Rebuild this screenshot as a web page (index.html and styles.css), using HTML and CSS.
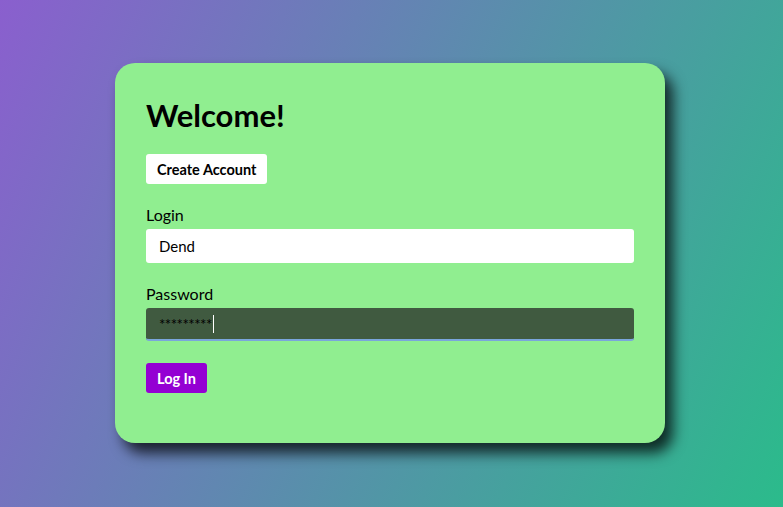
FILE: index.html
```html
<!DOCTYPE html>
<html>
<head>
<meta charset="utf-8">
<link rel="stylesheet" href="styles.css">
</head>
<body>
<div class="card">
  <h1 class="title">Welcome!</h1>
  <button class="btn btn-light">Create Account</button>
  <label class="label">Login</label>
  <div class="input input-light">Dend</div>
  <label class="label">Password</label>
  <div class="input input-dark">*********<span class="caret"></span></div>
  <button class="btn btn-violet">Log In</button>
</div>
</body>
</html>
```
FILE: styles.css
```css
html, body {
  margin: 0;
  height: 100%;
}
body {
  background: linear-gradient(115deg, #8a5fce 0%, #2bbb8b 100%);
  font-family: "Lato", "Open Sans", sans-serif;
  display: flex;
  justify-content: center;
  align-items: flex-start;
  padding: 63px 3px 0 0;
  box-sizing: border-box;
}
.card {
  width: 550px;
  height: 380px;
  box-sizing: border-box;
  background: #90ee90;
  border-radius: 20px;
  padding: 30px 31px;
  box-shadow: 8px 10px 14px rgba(0, 0, 0, 0.75);
  display: flex;
  flex-direction: column;
  align-items: flex-start;
}
.title {
  margin: 0;
  font-size: 31px;
  font-weight: 700;
  line-height: 44px;
  color: #000;
}
.btn {
  border: none;
  border-radius: 3px;
  font-family: inherit;
  font-weight: 700;
  font-size: 14.5px;
  padding: 0 11px;
  height: 30px;
  cursor: pointer;
}
.btn-light {
  margin-top: 17px;
  background: #fff;
  color: #000;
}
.btn-violet {
  margin-top: 22px;
  background: #9400d3;
  color: #fff;
}
.label {
  margin-top: 21px;
  font-size: 16px;
  line-height: 20px;
  color: #000;
}
.input {
  margin-top: 4px;
  width: 100%;
  height: 34px;
  box-sizing: border-box;
  border-radius: 3px;
  padding: 0 13px;
  font-size: 15px;
  display: flex;
  align-items: center;
}
.input-light {
  background: #fff;
  color: #000;
}
.input-dark {
  margin-top: 4px;
  height: 33px;
  background: #405a40;
  color: #000;
  border-bottom: 2px solid #7aa6dc;
  letter-spacing: -0.5px;
}
.caret {
  display: inline-block;
  width: 1px;
  height: 18px;
  background: #fff;
  margin-left: 1px;
}
```
